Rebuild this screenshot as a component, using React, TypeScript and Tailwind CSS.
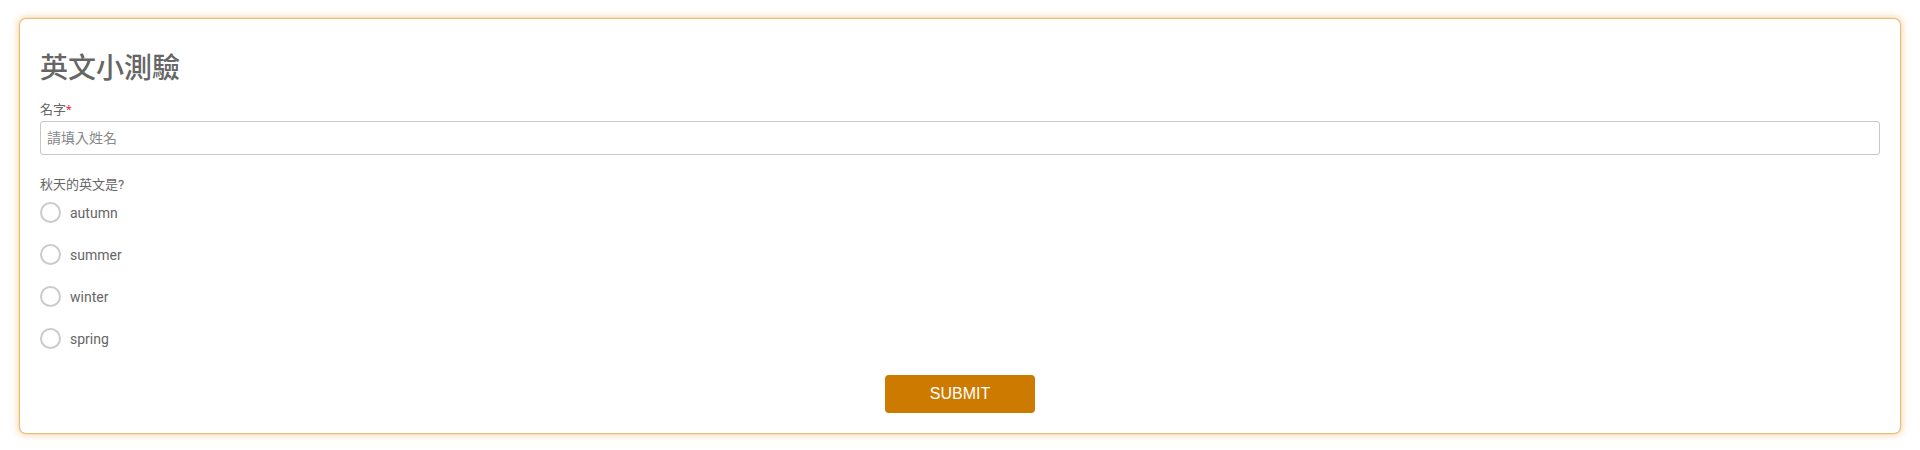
import React from "react";

const options = ["autumn", "summer", "winter", "spring"];

export default function App() {
  return (
    <div className="w-[1920px] h-[450px] bg-white px-5 pt-[19px]">
      <div className="rounded-md bg-white px-5 pt-8 pb-5 shadow-[0_0_1px_1px_rgba(232,176,96,0.9),0_0_7px_2px_rgba(236,180,100,0.55)] [font-family:Roboto,'Noto_Sans_CJK_TC',sans-serif] text-[#666]">
        <h1 className="text-[28px] leading-9 font-medium text-[#666]">英文小測驗</h1>
        <label className="mt-[13px] block text-[13px] leading-5 text-[#666]">
          名字<span className="text-[#e53935]">*</span>
        </label>
        <input
          className="mt-px block h-[34px] w-full rounded-[3px] border border-[#c8c8c8] px-[6px] text-[14px] text-[#666] placeholder:text-[#888] outline-none"
          placeholder="請填入姓名"
        />
        <p className="mt-5 text-[13px] leading-5 text-[#666]">秋天的英文是?</p>
        <div className="mt-[7px] flex flex-col gap-[21px]">
          {options.map((o) => (
            <label key={o} className="flex h-[21px] items-center">
              <span className="block h-[21px] w-[21px] rounded-full border-2 border-[#cbcbcb] bg-white" />
              <span className="ml-[9px] text-[14px] leading-5 text-[#666]">{o}</span>
            </label>
          ))}
        </div>
        <div className="mt-[26px] flex justify-center">
          <button className="h-[38px] w-[150px] rounded bg-[#cd7a00] text-[16px] text-white [font-family:'Liberation_Sans',Arial,sans-serif]">
            SUBMIT
          </button>
        </div>
      </div>
    </div>
  );
}
